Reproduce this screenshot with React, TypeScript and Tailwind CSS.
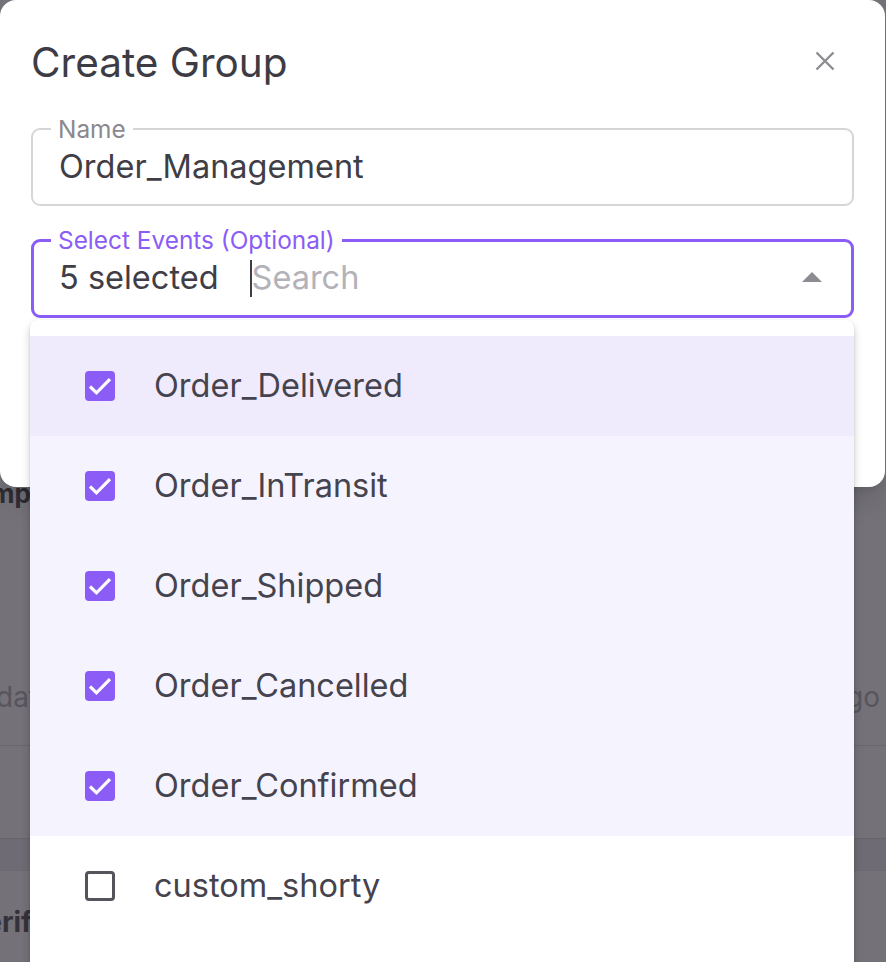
import React from "react";

const items = [
  { label: "Order_Delivered", checked: true, active: true },
  { label: "Order_InTransit", checked: true },
  { label: "Order_Shipped", checked: true },
  { label: "Order_Cancelled", checked: true },
  { label: "Order_Confirmed", checked: true },
  { label: "custom_shorty", checked: false },
  { label: "custom_event", checked: false },
];

function Check({ checked }: { checked: boolean }) {
  if (checked) {
    return (
      <div className="w-[30px] h-[30px] rounded-[4px] bg-[#8b5cf6] flex items-center justify-center shrink-0">
        <svg width="30" height="30" viewBox="0 0 30 30" fill="none">
          <path d="M5 15.5 L11.5 21.8 L25 8.2" stroke="white" strokeWidth="3.2" strokeLinecap="butt" strokeLinejoin="miter" />
        </svg>
      </div>
    );
  }
  return <div className="w-[30px] h-[30px] rounded-[4px] border-[3px] border-[#55535b] bg-white shrink-0" />;
}

export default function App() {
  return (
    <div className="relative w-[886px] h-[962px] overflow-hidden bg-[#747179] font-['Inter','Noto_Sans',sans-serif]">
      {/* dimmed background page */}
      <div className="flex flex-col">
        <div className="h-[474px]" />
        <div className="h-[40px] flex items-center">
          <span className="ml-[-40px] text-[26px] font-bold text-[#2f2d34] leading-none">Templates</span>
        </div>
        <div className="h-[158px]" />
        <div className="h-[50px] flex items-center justify-between">
          <span className="ml-[-42px] text-[28px] text-[#57555d] leading-none">Updated</span>
          <span className="mr-[6px] text-[28px] text-[#57555d] leading-none">2 days ago</span>
        </div>
        <div className="h-[23px]" />
        <div className="h-[1px] bg-[#69666e]" />
        <div className="h-[92px]" />
        <div className="h-[1px] bg-[#66636b]" />
        <div className="h-[31px] bg-[#6e6b74]" />
        <div className="h-[1px] bg-[#6c6971]" />
        <div className="h-[102px] flex items-center">
          <span className="ml-[-34px] text-[28px] font-bold text-[#34323a] leading-none">Verify</span>
        </div>
      </div>

      {/* dialog */}
      <div className="absolute left-0 top-0 w-[885px] h-[487px] bg-white rounded-[16px] shadow-xl">
        <div className="flex items-center justify-between pl-[31px] pr-[50px] pt-[39px]">
          <h2 className="text-[40.5px] font-normal text-[#3d3c45] leading-[48px]">Create Group</h2>
          <svg width="20" height="20" viewBox="0 0 20 20" className="mt-[-4px]">
            <path d="M1.5 1.5 L18.5 18.5 M18.5 1.5 L1.5 18.5" stroke="#8e8c93" strokeWidth="2.4" />
          </svg>
        </div>

        <div className="flex flex-col gap-[33px] px-[31px] pt-[41px]">
          {/* Name field */}
          <div className="relative h-[78px] rounded-[9px] border-[2px] border-[#d6d6d8] flex items-center pl-[26px]">
            <span className="absolute left-[18px] top-[-14px] bg-white px-[7px] text-[24.4px] leading-[26px] text-[#8a898f]">Name</span>
            <span className="text-[32.5px] text-[#3f3e47] leading-none">Order_Management</span>
          </div>

          {/* Select field */}
          <div className="relative h-[79px] rounded-[9px] border-[3px] border-[#8b5cf6] flex items-center pl-[25px] pr-[29px]">
            <span className="absolute left-[17px] top-[-15px] bg-white px-[7px] text-[24.4px] leading-[26px] text-[#8b5cf6]">Select Events (Optional)</span>
            <span className="text-[32.5px] text-[#3f3e47] leading-none">5 selected</span>
            <span className="ml-[31px] w-[2px] h-[37px] bg-[#3f3e47]" />
            <span className="text-[32.5px] text-[#b4b2b9] leading-none">Search</span>
            <div className="flex-1" />
            <svg width="20" height="10" viewBox="0 0 20 10" className="mb-[3px]">
              <path d="M0 10 L10 0 L20 10 Z" fill="#8e8b93" />
            </svg>
          </div>
        </div>
      </div>

      {/* dropdown list */}
      <div className="absolute left-[30px] top-[320px] w-[824px] h-[700px] bg-white rounded-[8px] shadow-[0_5px_10px_rgba(0,0,0,0.18),0_1px_3px_rgba(0,0,0,0.12)] pt-[16px] flex flex-col">
        {items.map((it) => (
          <div
            key={it.label}
            className={
              "h-[100px] shrink-0 flex items-center pl-[55px] gap-[39px] " +
              (it.active ? "bg-[#efebfc]" : it.checked ? "bg-[#f5f3fe]" : "bg-white")
            }
          >
            <Check checked={it.checked} />
            <span className="text-[32.5px] text-[#45434d] leading-none">{it.label}</span>
          </div>
        ))}
      </div>
    </div>
  );
}
